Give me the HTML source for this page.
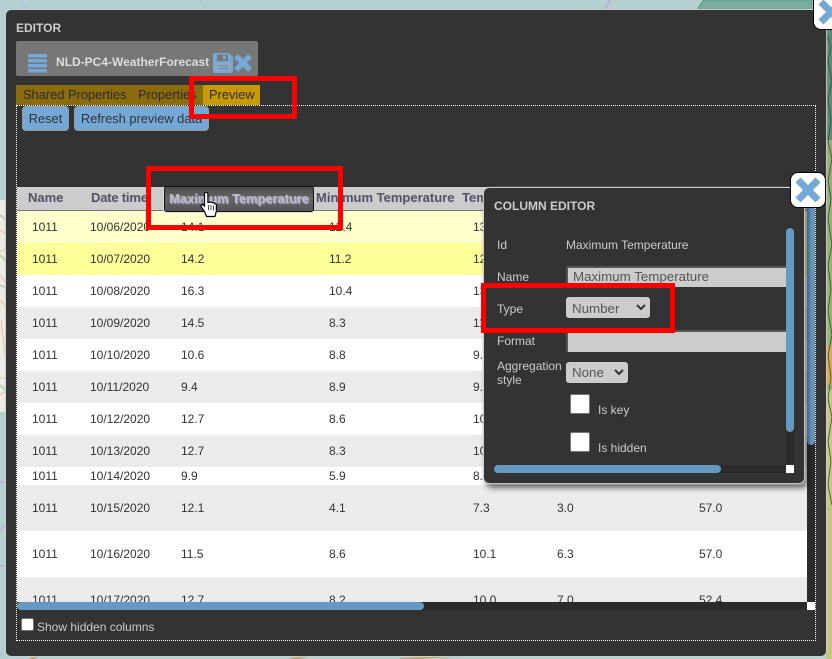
<!DOCTYPE html>
<html><head><meta charset="utf-8"><style>
html,body{margin:0;padding:0}
body{width:832px;height:659px;overflow:hidden;position:relative;background:#b5d0d1;font-family:"Liberation Sans",sans-serif;font-size:12px}
.a{position:absolute;white-space:nowrap}
.r{position:absolute;left:17px;width:790px}
.c{position:absolute;white-space:nowrap;color:#333;font-size:12px;line-height:14px}
.h{position:absolute;white-space:nowrap;font-weight:bold;font-size:13px;color:#555;line-height:15px;top:190px;text-shadow:1px 1px 1px #c8c0ee}
.redbox{position:absolute;border:5px solid #f00;box-sizing:border-box;z-index:50}
.lbl{position:absolute;white-space:nowrap;color:#ccc;font-size:12px;line-height:14px;font-weight:normal}
.t{font-size:12.85px;line-height:15px;color:#2b2b2b;top:87px}
</style></head><body>

<!-- map background -->
<svg class="a" style="left:0;top:0" width="832" height="659">
<rect width="832" height="659" fill="#b5d0d1"/>
<rect x="0" y="200" width="7" height="212" fill="#ecebe4"/>
<g opacity=".6">
<path d="M0 230l6 4M0 252l6-4M0 275l6 8M0 300l6 6M1 320l4 35M0 378h6M0 395l6-4" stroke="#e9a070" stroke-width="1" fill="none"/>
<path d="M0 215l6 5M0 255l6 6M0 285l6 3M0 385l6 6" stroke="#9cc08c" stroke-width="2" fill="none"/>
</g>
<path d="M0 482h6M0 530l6-6M0 565l6 2" stroke="#b9a3d8" stroke-width="1" fill="none"/>
<path d="M20 0l6 8M200 0l6 8" stroke="#a7b7e0" stroke-width="1" fill="none" stroke-dasharray="2 1"/>
<path d="M610 0l-5 9" stroke="#c7a0d0" stroke-width="1.500" fill="none"/>
<path d="M698 9q2-6 6-9h108v9z" fill="#76ad9c" stroke="#4d7d70" stroke-width=".6"/>
<rect x="826" y="30" width="6" height="110" fill="#5b8a78"/>
<rect x="826" y="140" width="6" height="100" fill="#94b074"/>
<rect x="826" y="240" width="6" height="150" fill="#95b46f"/>
<rect x="826" y="345" width="6" height="40" fill="#d9a94f"/>
<rect x="826" y="390" width="6" height="269" fill="#c4c77e"/>
<path d="M827 35l4 12-3 14 4 20-4 18 3 22-3 20 4 18-4 22 3 18-3 20 4 26-4 20 3 24-3 22 4 24-4 20 3 22-3 22 4 18-4 24 3 20-3 24 4 20" stroke="#3b4a38" stroke-width=".8" fill="none"/>
<path d="M30 659l12-4M290 659l30-4M400 659l60-3" stroke="#b9a060" stroke-width="1.500" fill="none"/>
</svg>

<!-- main dialog -->
<div class="a" style="left:6px;top:10px;width:820px;height:646px;background:#333;border-radius:5px;box-shadow:0 0 1px 1px #cfcfcf"></div>
<div class="a" style="left:16px;top:21px;color:#ccc;font-weight:bold;font-size:12px;line-height:14px">EDITOR</div>

<!-- title tile -->
<div class="a" style="left:16px;top:41px;width:242px;height:35px;background:#777;border-radius:2px"></div>
<svg class="a" style="left:27px;top:53px" width="21" height="20"><path d="M1 1h19v3.500H1zM1 6h19v3.500H1zM1 11h19v3.500H1zM1 16h19v3.500H1z" fill="#74a8d6"/><path d="M1 5h19M1 10h19M1 15h19" stroke="#777" stroke-width="1"/></svg>
<div class="a" style="left:56px;top:55px;color:#ddd;font-weight:bold;font-size:12px;line-height:15px">NLD-PC4-WeatherForecast</div>
<svg class="a" style="left:213px;top:53px" width="20" height="20"><path d="M2 0h14l4 4v14a2 2 0 0 1-2 2H2a2 2 0 0 1-2-2V2a2 2 0 0 1 2-2z" fill="#74a8d6"/><rect x="4" y="1.500" width="11" height="6.500" fill="#777"/><rect x="10" y="2.500" width="3" height="4" fill="#74a8d6"/><rect x="2" y="10" width="16" height="8" fill="#8fa9c0"/><path d="M5 13h10M5 15.500h10" stroke="#5f8db5" stroke-width="1"/></svg>
<svg class="a" style="left:234px;top:54px" width="18" height="18"><path d="M2 2l14 14M16 2L2 16" stroke="#74a8d6" stroke-width="5.500"/></svg>

<!-- tabs -->
<div class="a" style="left:16px;top:85px;width:187px;height:20px;background:#8b6c0c"></div>
<div class="a" style="left:203px;top:85px;width:57px;height:20px;background:#c99a00"></div>
<div class="a t" style="left:23px">Shared Properties</div>
<div class="a t" style="left:138px">Properties</div>
<div class="a t" style="left:209px">Preview</div>

<!-- dotted frame -->
<div class="a" style="left:16px;top:105px;width:798px;height:534px;border:1px dotted #fff"></div>

<!-- buttons -->
<div class="a" style="left:22px;top:106px;width:45px;height:23px;background:#74a8d6;border:1px solid #999;border-radius:4px;color:#333;line-height:24px;text-align:center;font-size:12.85px">Reset</div>
<div class="a" style="left:74px;top:106px;width:133px;height:23px;background:#74a8d6;border:1px solid #999;border-radius:4px;color:#333;line-height:24px;text-align:center;font-size:12.85px">Refresh preview data</div>

<!-- table clip -->
<div class="a" style="left:0;top:0;width:807px;height:602px;overflow:hidden">
<div class="r" style="top:187px;height:23px;background:#ccc;border-bottom:2px solid #777;box-sizing:content-box"></div>
<div class="r" style="top:211px;height:32px;background:#ffffcc"></div>
<div class="r" style="top:243px;height:32px;background:#ffff99"></div>
<div class="r" style="top:275px;height:32px;background:#fff"></div>
<div class="r" style="top:307px;height:32px;background:#ebebeb"></div>
<div class="r" style="top:339px;height:32px;background:#fff"></div>
<div class="r" style="top:371px;height:32px;background:#ebebeb"></div>
<div class="r" style="top:403px;height:32px;background:#fff"></div>
<div class="r" style="top:435px;height:32px;background:#ebebeb"></div>
<div class="r" style="top:467px;height:18px;background:#fff"></div>
<div class="r" style="top:485px;height:46px;background:#ebebeb"></div>
<div class="r" style="top:531px;height:46px;background:#fff"></div>
<div class="r" style="top:577px;height:25px;background:#ebebeb"></div>

<div class="h" style="left:28px">Name</div>
<div class="h" style="left:91px;letter-spacing:-.2px">Date time</div>
<div class="h" style="left:316px">Minimum Temperature</div>
<div class="h" style="left:462px">Temperature</div>

<div class="c" style="left:32px;top:220px">1011</div><div class="c" style="left:90px;top:220px">10/06/2020</div><div class="c" style="left:181px;top:220px">14.1</div><div class="c" style="left:329px;top:220px">12.4</div><div class="c" style="left:473px;top:220px">13.2</div>
<div class="c" style="left:32px;top:252px">1011</div><div class="c" style="left:90px;top:252px">10/07/2020</div><div class="c" style="left:181px;top:252px">14.2</div><div class="c" style="left:329px;top:252px">11.2</div><div class="c" style="left:473px;top:252px">12.7</div>
<div class="c" style="left:32px;top:284px">1011</div><div class="c" style="left:90px;top:284px">10/08/2020</div><div class="c" style="left:181px;top:284px">16.3</div><div class="c" style="left:329px;top:284px">10.4</div><div class="c" style="left:473px;top:284px">13.3</div>
<div class="c" style="left:32px;top:316px">1011</div><div class="c" style="left:90px;top:316px">10/09/2020</div><div class="c" style="left:181px;top:316px">14.5</div><div class="c" style="left:329px;top:316px">8.3</div><div class="c" style="left:473px;top:316px">11.4</div>
<div class="c" style="left:32px;top:348px">1011</div><div class="c" style="left:90px;top:348px">10/10/2020</div><div class="c" style="left:181px;top:348px">10.6</div><div class="c" style="left:329px;top:348px">8.8</div><div class="c" style="left:473px;top:348px">9.7</div>
<div class="c" style="left:32px;top:380px">1011</div><div class="c" style="left:90px;top:380px">10/11/2020</div><div class="c" style="left:181px;top:380px">9.4</div><div class="c" style="left:329px;top:380px">8.9</div><div class="c" style="left:473px;top:380px">9.2</div>
<div class="c" style="left:32px;top:412px">1011</div><div class="c" style="left:90px;top:412px">10/12/2020</div><div class="c" style="left:181px;top:412px">12.7</div><div class="c" style="left:329px;top:412px">8.6</div><div class="c" style="left:473px;top:412px">10.6</div>
<div class="c" style="left:32px;top:444px">1011</div><div class="c" style="left:90px;top:444px">10/13/2020</div><div class="c" style="left:181px;top:444px">12.7</div><div class="c" style="left:329px;top:444px">8.3</div><div class="c" style="left:473px;top:444px">10.5</div>
<div class="c" style="left:32px;top:469px">1011</div><div class="c" style="left:90px;top:469px">10/14/2020</div><div class="c" style="left:181px;top:469px">9.9</div><div class="c" style="left:329px;top:469px">5.9</div><div class="c" style="left:473px;top:469px">8.0</div>
<div class="c" style="left:32px;top:501px">1011</div><div class="c" style="left:90px;top:501px">10/15/2020</div><div class="c" style="left:181px;top:501px">12.1</div><div class="c" style="left:329px;top:501px">4.1</div><div class="c" style="left:473px;top:501px">7.3</div><div class="c" style="left:557px;top:501px">3.0</div><div class="c" style="left:699px;top:501px">57.0</div>
<div class="c" style="left:32px;top:547px">1011</div><div class="c" style="left:90px;top:547px">10/16/2020</div><div class="c" style="left:181px;top:547px">11.5</div><div class="c" style="left:329px;top:547px">8.6</div><div class="c" style="left:473px;top:547px">10.1</div><div class="c" style="left:557px;top:547px">6.3</div><div class="c" style="left:699px;top:547px">57.0</div>
<div class="c" style="left:32px;top:593px">1011</div><div class="c" style="left:90px;top:593px">10/17/2020</div><div class="c" style="left:181px;top:593px">12.7</div><div class="c" style="left:329px;top:593px">8.2</div><div class="c" style="left:473px;top:593px">10.0</div><div class="c" style="left:557px;top:593px">7.0</div><div class="c" style="left:699px;top:593px">52.4</div>
</div>

<!-- dragged header -->
<div class="a" style="left:164px;top:186px;width:148px;height:24px;background:linear-gradient(#4a4a4a,#666 45%,#555);border:1px solid #111;box-shadow:-1px 1px 0 #ddd;border-radius:3px;color:#bbb;font-weight:bold;font-size:12.85px;line-height:24px;text-align:center;text-shadow:1px 1px 1px #b9b0ea;z-index:5">Maximum Temperature</div>
<svg class="a" style="left:200px;top:192px;z-index:6" width="18" height="26"><path d="M4.500 2a1.700 1.700 0 0 1 3.400 0V10.500l2.500-.5 2 .6 2 .6 2 1.300V19l-1.500 5.500H6.500l-2-5-3.500-5q-.5-1.800 1.200-2l2.300 1.500z" fill="#fff" stroke="#000" stroke-width="1.200"/><path d="M8.500 13v5M11 13v5M13.500 13.500v5" stroke="#000" stroke-width=".7"/></svg>

<!-- main scrollbars -->
<div class="a" style="left:17px;top:602px;width:790px;height:8px;background:#2b2b2b"></div>
<div class="a" style="left:17px;top:602px;width:407px;height:8px;background:#6699c2;border-radius:4px"></div>
<div class="a" style="left:807px;top:187px;width:8px;height:415px;background:#2b2b2b"></div>
<div class="a" style="left:807px;top:187px;width:8px;height:258px;background:#6699c2;border-radius:0 0 4px 4px"></div>
<div class="a" style="left:807px;top:602px;width:8px;height:8px;background:#fff"></div>

<!-- show hidden -->
<div class="a" style="left:21px;top:618px;width:11px;height:11px;background:#fff;border:1px solid #777;border-radius:2px"></div>
<div class="a" style="left:37px;top:620px;color:#ccc;font-size:12px;line-height:14px">Show hidden columns</div>

<!-- column editor -->
<div class="a" style="left:484px;top:188px;width:320px;height:295px;background:#333;border-radius:5px;box-shadow:0 0 1px 1px #cfcfcf,3px 4px 6px 1px rgba(0,0,0,.55);z-index:10">
  <div class="lbl" style="left:10px;top:11px;font-weight:bold">COLUMN EDITOR</div>
  <div class="lbl" style="left:13px;top:50px">Id</div>
  <div class="lbl" style="left:82px;top:50px">Maximum Temperature</div>
  <div class="lbl" style="left:13px;top:82px">Name</div>
  <div style="position:absolute;left:82px;top:78px;width:220px;height:21px;overflow:hidden;background:#ccc;border-top:2px solid #555;border-left:2px solid #555;box-sizing:border-box;color:#555;line-height:18px;padding-left:5px;font-size:13.33px;white-space:nowrap">Maximum Temperature</div>
  <div class="lbl" style="left:13px;top:114px">Type</div>
  <div style="position:absolute;left:82px;top:109px;width:84px;height:21px;background:#ccc;border-radius:3px;color:#555;line-height:23px;padding-left:6px;box-sizing:border-box;font-size:13.33px">Number<svg style="position:absolute;left:70px;top:7px" width="10" height="7"><path d="M1 1l4 4 4-4" stroke="#333" stroke-width="2" fill="none"/></svg></div>
  <div class="lbl" style="left:13px;top:146px">Format</div>
  <div style="position:absolute;left:82px;top:142px;width:220px;height:22px;background:#ccc;border-top:2px solid #555;border-left:2px solid #555;box-sizing:border-box"></div>
  <div class="lbl" style="left:13px;top:171px">Aggregation</div>
  <div class="lbl" style="left:13px;top:185px">style</div>
  <div style="position:absolute;left:82px;top:174px;width:62px;height:21px;background:#ccc;border-radius:3px;color:#555;line-height:22px;padding-left:6px;box-sizing:border-box;font-size:13.33px">None<svg style="position:absolute;left:48px;top:7px" width="10" height="7"><path d="M1 1l4 4 4-4" stroke="#333" stroke-width="2" fill="none"/></svg></div>
  <div style="position:absolute;left:86px;top:206px;width:18px;height:18px;background:#fff;border:1px solid #777;border-radius:2px"></div>
  <div class="lbl" style="left:114px;top:215px">Is key</div>
  <div style="position:absolute;left:86px;top:244px;width:18px;height:18px;background:#fff;border:1px solid #777;border-radius:2px"></div>
  <div class="lbl" style="left:114px;top:253px">Is hidden</div>
  <div style="position:absolute;left:302px;top:40px;width:8px;height:237px;background:#2b2b2b"></div>
  <div style="position:absolute;left:302px;top:40px;width:8px;height:204px;background:#6699c2;border-radius:4px"></div>
  <div style="position:absolute;left:10px;top:277px;width:292px;height:8px;background:#2b2b2b"></div>
  <div style="position:absolute;left:10px;top:277px;width:227px;height:8px;background:#6699c2;border-radius:4px"></div>
  <div style="position:absolute;left:302px;top:277px;width:8px;height:8px;background:#fff"></div>
</div>

<!-- close buttons -->
<div class="a" style="left:790px;top:172px;width:34px;height:34px;background:#fff;border:1px solid #000;border-radius:8px;z-index:20"><svg width="34" height="34" style="display:block"><path d="M7 7l20 20M27 7L7 27" stroke="#74a8d6" stroke-width="7"/></svg></div>
<div class="a" style="left:813px;top:-6px;width:34px;height:34px;background:#fff;border:1px solid #000;border-radius:8px;z-index:20"><svg width="34" height="34" style="display:block"><path d="M7 7l20 20M27 7L7 27" stroke="#74a8d6" stroke-width="7"/></svg></div>

<!-- red annotations -->
<div class="redbox" style="left:189px;top:76px;width:108px;height:43px"></div>
<div class="redbox" style="left:146px;top:166px;width:197px;height:64px"></div>
<div class="redbox" style="left:481px;top:283px;width:194px;height:50px"></div>
</body></html>
